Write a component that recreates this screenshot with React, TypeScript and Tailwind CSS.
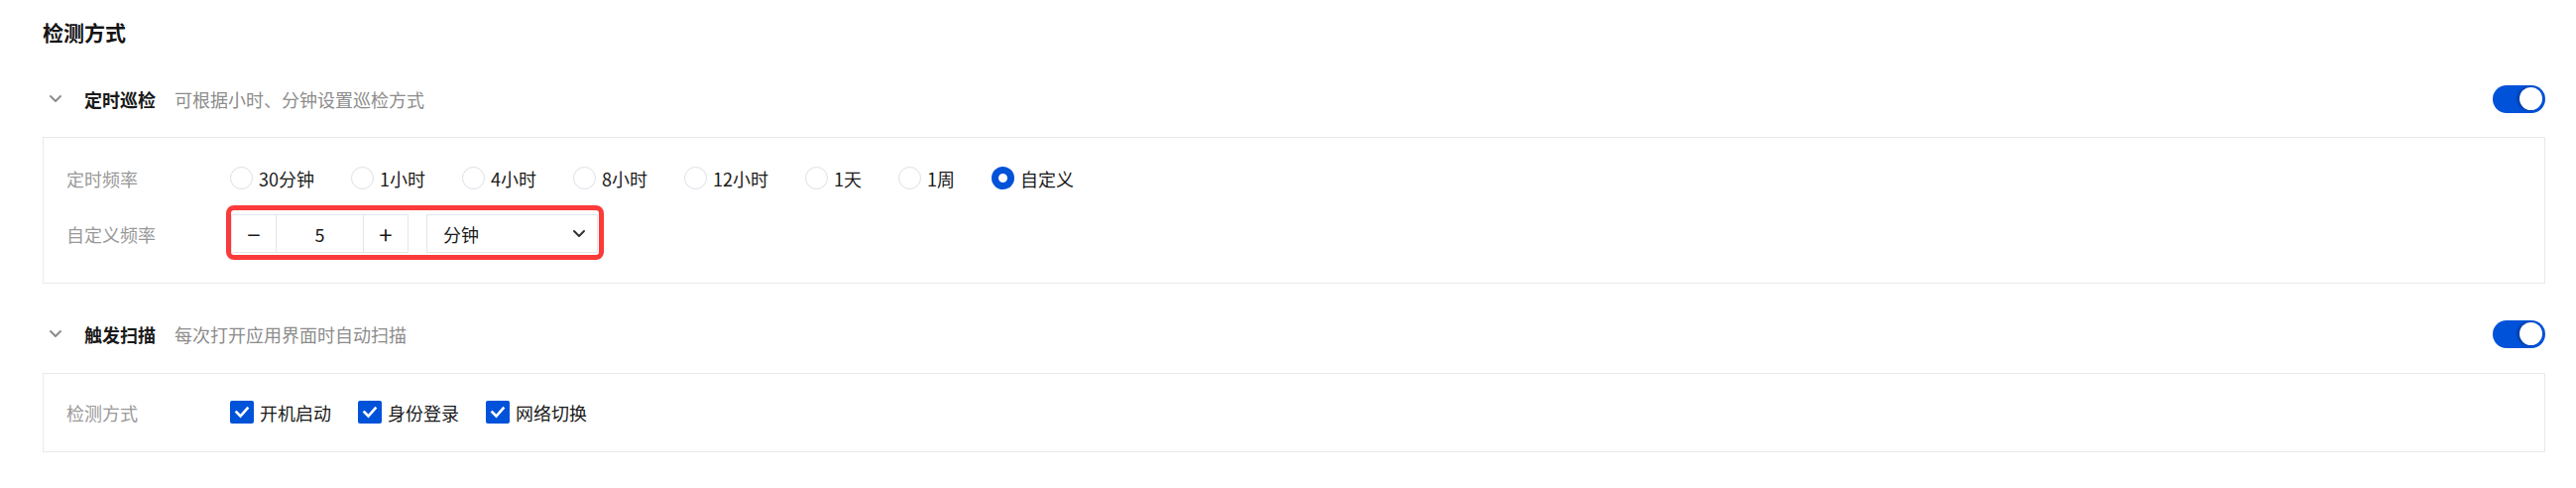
import React from "react";

const FONT = { fontFamily: '"Noto Sans CJK SC", "Noto Sans", sans-serif' };

function Chevron() {
  return (
    <svg width="14" height="9" viewBox="0 0 14 9" className="shrink-0">
      <polyline points="2,2 7,7 12,2" fill="none" stroke="#8c8c8c" strokeWidth="2" strokeLinecap="round" strokeLinejoin="round" />
    </svg>
  );
}

function Toggle() {
  return (
    <div className="relative w-[53px] h-[28px] rounded-full bg-[#0052d9] shrink-0">
      <div className="absolute right-[3px] top-[2.5px] w-[23px] h-[23px] rounded-full bg-white shadow-[-2px_0_3px_rgba(0,0,40,0.35)]" />
    </div>
  );
}

function Header({ title, desc }: { title: string; desc: string }) {
  return (
    <div className="flex items-center justify-between">
      <div className="flex items-center">
        <div className="pl-[6px] w-[42px]">
          <Chevron />
        </div>
        <span className="text-[18px] font-bold text-[#1a1a1a] leading-none">{title}</span>
        <span className="ml-[19px] text-[18px] text-[#8c8c8c] leading-none">{desc}</span>
      </div>
      <Toggle />
    </div>
  );
}

function Radio({ label, checked }: { label: string; checked?: boolean }) {
  return (
    <div className="flex items-center mr-[37px]">
      {checked ? (
        <div className="w-[23px] h-[23px] rounded-full border-[7px] border-[#0052d9] bg-white box-border" />
      ) : (
        <div className="w-[23px] h-[23px] rounded-full border border-[#dcdfe6] bg-white box-border" />
      )}
      <span className="ml-[6px] text-[18px] text-[#1a1a1a] leading-none">{label}</span>
    </div>
  );
}

function Checkbox({ label }: { label: string }) {
  return (
    <div className="flex items-center mr-[27px]">
      <div className="w-[24px] h-[23px] bg-[#0052d9] rounded-[2px] flex items-center justify-center">
        <svg width="16" height="13" viewBox="0 0 16 13">
          <polyline points="2.5,6.5 6.5,10.5 13.5,2.5" fill="none" stroke="white" strokeWidth="2.6" strokeLinecap="square" />
        </svg>
      </div>
      <span className="ml-[6px] text-[18px] text-[#1a1a1a] leading-none">{label}</span>
    </div>
  );
}

export default function App() {
  const radios = ["30分钟", "1小时", "4小时", "8小时", "12小时", "1天", "1周"];
  return (
    <div className="w-[2598px] h-[492px] bg-white pl-[43px] pr-[31px]" style={FONT}>
      <div className="h-[65px] flex items-center">
        <span className="text-[21px] font-bold text-[#141414] leading-none">检测方式</span>
      </div>

      <div className="h-[73px] pb-[4px] flex flex-col justify-center">
        <Header title="定时巡检" desc="可根据小时、分钟设置巡检方式" />
      </div>

      <div className="border border-[#e7e9ee] pl-[23px] pt-[21px] pb-[30px]">
        <div className="flex items-center h-[39px]">
          <div className="w-[165px] text-[18px] text-[#999999] leading-none">定时频率</div>
          <div className="flex items-center">
            {radios.map((r) => (
              <Radio key={r} label={r} />
            ))}
            <Radio label="自定义" checked />
          </div>
        </div>
        <div className="flex items-center h-[39px] mt-[17px]">
          <div className="w-[166px] text-[18px] text-[#999999] leading-none">自定义频率</div>
          <div className="relative flex items-center">
            <div className="flex h-[39px] border border-[#e3e6eb] box-border">
              <div className="w-[44px] flex items-center justify-center text-[24px] text-[#1a1a1a] leading-none">−</div>
              <div className="w-[89px] border-l border-r border-[#e3e6eb] flex items-center justify-center text-[18px] text-[#1a1a1a] leading-none">5</div>
              <div className="w-[44px] flex items-center justify-center text-[24px] text-[#1a1a1a] leading-none">+</div>
            </div>
            <div className="ml-[18px] w-[173px] h-[39px] border border-[#e3e6eb] box-border flex items-center justify-between pl-[16px] pr-[11px]">
              <span className="text-[18px] text-[#1a1a1a] leading-none">分钟</span>
              <svg width="14" height="9" viewBox="0 0 14 9">
                <polyline points="2,2 7,7 12,2" fill="none" stroke="#333" strokeWidth="2" strokeLinecap="round" strokeLinejoin="round" />
              </svg>
            </div>
            <div className="absolute left-[-5px] right-[-6px] top-[-9px] bottom-[-7px] border-[5px] border-[#fb3a3a] rounded-[8px] pointer-events-none" />
          </div>
        </div>
      </div>

      <div className="h-[90px] pt-[11px] flex flex-col justify-center">
        <Header title="触发扫描" desc="每次打开应用界面时自动扫描" />
      </div>

      <div className="border border-[#e7e9ee] pl-[23px] pt-[19px] pb-[20px]">
        <div className="flex items-center h-[39px]">
          <div className="w-[165px] text-[18px] text-[#999999] leading-none">检测方式</div>
          <div className="flex items-center">
            <Checkbox label="开机启动" />
            <Checkbox label="身份登录" />
            <Checkbox label="网络切换" />
          </div>
        </div>
      </div>
    </div>
  );
}
